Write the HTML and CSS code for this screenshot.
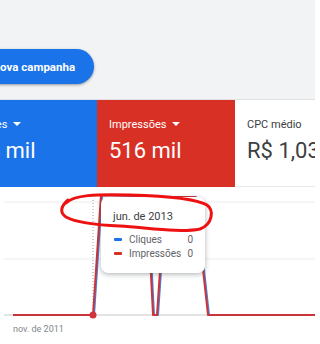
FILE: index.html
```html
<!DOCTYPE html>
<html lang="pt-BR">
<head>
<meta charset="utf-8">
<title>Campanhas</title>
<link rel="stylesheet" href="styles.css">
</head>
<body>
<div class="page">
  <header class="top">
    <button class="btn-new">Nova campanha</button>
  </header>
  <section class="cards">
    <div class="card card-blue">
      <div class="card-label">Cliques <span class="caret"></span></div>
      <div class="card-value">1,4 mil</div>
    </div>
    <div class="card card-red">
      <div class="card-label">Impressões <span class="caret"></span></div>
      <div class="card-value">516 mil</div>
    </div>
    <div class="card card-white">
      <div class="card-label">CPC médio</div>
      <div class="card-value">R$ 1,03</div>
    </div>
  </section>
  <section class="chart">
    <svg class="plot" width="315" height="157" viewBox="0 0 315 157">
      <line x1="4" y1="15" x2="315" y2="15" class="grid"/>
      <line x1="4" y1="72" x2="315" y2="72" class="grid"/>
      <line x1="4" y1="128" x2="315" y2="128" class="axis"/>
      <line x1="93" y1="13" x2="93" y2="128" class="cursor"/>
      <polyline class="line-blue" points="14,128 94,128 102,8 148,9 154,128 158,128 166,10 196,10 209,128 315,128"/>
      <polyline class="line-red" points="13,128 93,128 101,8 147,9 153,128 157,128 165,10 195,10 208,128 315,128"/>
      <circle cx="93" cy="128" r="3.5" class="dot"/>
      <text x="13" y="145" class="xlabel">nov. de 2011</text>
    </svg>
    <div class="tooltip">
      <div class="tip-title">jun. de 2013</div>
      <div class="tip-row"><span class="swatch swatch-blue"></span><span class="tip-name">Cliques</span><span class="tip-val">0</span></div>
      <div class="tip-row"><span class="swatch swatch-red"></span><span class="tip-name">Impressões</span><span class="tip-val">0</span></div>
    </div>
  </section>
  <svg class="annotation" width="315" height="344" viewBox="0 0 315 344">
    <path d="M 66 203 C 74 195, 95 194, 130 195 C 165 196, 195 198, 207 205 C 214 210, 213 224, 200 229 C 180 233, 150 228, 120 226 C 95 225, 75 222, 66 217 C 60 213, 60 207, 68 200"/>
  </svg>
</div>
</body>
</html>
```

FILE: styles.css
```css
html, body {
  margin: 0;
  padding: 0;
}
body {
  width: 315px;
  height: 344px;
  overflow: hidden;
  font-family: Roboto, "Liberation Sans", Arial, sans-serif;
  background: #ffffff;
}
.page {
  position: relative;
  width: 315px;
  height: 344px;
  overflow: hidden;
  background: #ffffff;
}
.top {
  box-sizing: border-box;
  height: 100px;
  background: #f1f3f4;
  border-bottom: 1px solid #dfe1e5;
  padding-top: 49px;
}
.btn-new {
  display: flex;
  align-items: center;
  height: 35px;
  margin: 0 0 0 -32px;
  padding: 0 19px 0 24px;
  border: 0;
  border-radius: 18px;
  background: #1a73e8;
  color: #ffffff;
  font-family: Roboto, "Liberation Sans", Arial, sans-serif;
  font-size: 11.5px;
  font-weight: 700;
  letter-spacing: 0;
  box-shadow: 0 1px 3px rgba(60, 64, 67, 0.35), 0 1px 2px rgba(60, 64, 67, 0.2);
}
.cards {
  display: flex;
  height: 87px;
  margin-left: -41px;
}
.card {
  flex: 0 0 138px;
  box-sizing: border-box;
  padding: 18px 12px 0 12px;
  white-space: nowrap;
}
.card-blue {
  background: #1a73e8;
  color: #ffffff;
}
.card-red {
  background: #d93025;
  color: #ffffff;
}
.card-white {
  background: #ffffff;
  color: #3c4043;
  border-bottom: 1px solid #e8eaed;
}
.card-label {
  font-size: 11px;
  line-height: 14px;
}
.caret {
  display: inline-block;
  width: 0;
  height: 0;
  margin-left: 3px;
  border-left: 4px solid transparent;
  border-right: 4px solid transparent;
  border-top: 4px solid #ffffff;
  vertical-align: 2px;
}
.card-value {
  margin-top: 6px;
  font-size: 22px;
  line-height: 26px;
}
.chart {
  position: relative;
  height: 157px;
}
.plot {
  display: block;
}
.grid {
  stroke: #ececec;
  stroke-width: 1;
}
.axis {
  stroke: #e3e3e3;
  stroke-width: 2;
}
.cursor {
  stroke: #9aa0a6;
  stroke-width: 1;
  stroke-dasharray: 1 2;
}
.line-blue {
  fill: none;
  stroke: #4a7fd8;
  stroke-width: 2;
  stroke-linejoin: round;
}
.line-red {
  fill: none;
  stroke: #c9353a;
  stroke-width: 2;
  stroke-linejoin: round;
}
.dot {
  fill: #d0343a;
}
.xlabel {
  font-family: Roboto, "Liberation Sans", Arial, sans-serif;
  font-size: 9px;
  fill: #80868b;
}
.tooltip {
  position: absolute;
  left: 101px;
  top: 10px;
  box-sizing: border-box;
  width: 104px;
  height: 76px;
  padding: 13px 12px 0 12px;
  background: #ffffff;
  border-radius: 7px;
  box-shadow: 0 1px 4px rgba(60, 64, 67, 0.3), 0 2px 6px rgba(60, 64, 67, 0.12);
}
.tip-title {
  font-size: 11px;
  line-height: 14px;
  color: #3c4043;
  margin-bottom: 8px;
}
.tip-row {
  display: flex;
  align-items: center;
  height: 14px;
  font-size: 10px;
  color: #5f6368;
}
.swatch {
  flex: 0 0 8px;
  height: 3px;
  margin: 0 7px 0 1px;
  border-radius: 1px;
}
.swatch-blue {
  background: #1a73e8;
}
.swatch-red {
  background: #d93025;
}
.tip-name {
  flex: 1 1 auto;
}
.tip-val {
  flex: 0 0 auto;
}
.annotation {
  position: absolute;
  left: 0;
  top: 0;
  pointer-events: none;
}
.annotation path {
  fill: none;
  stroke: #ee1111;
  stroke-width: 3;
  stroke-linecap: round;
  stroke-linejoin: round;
}
```
